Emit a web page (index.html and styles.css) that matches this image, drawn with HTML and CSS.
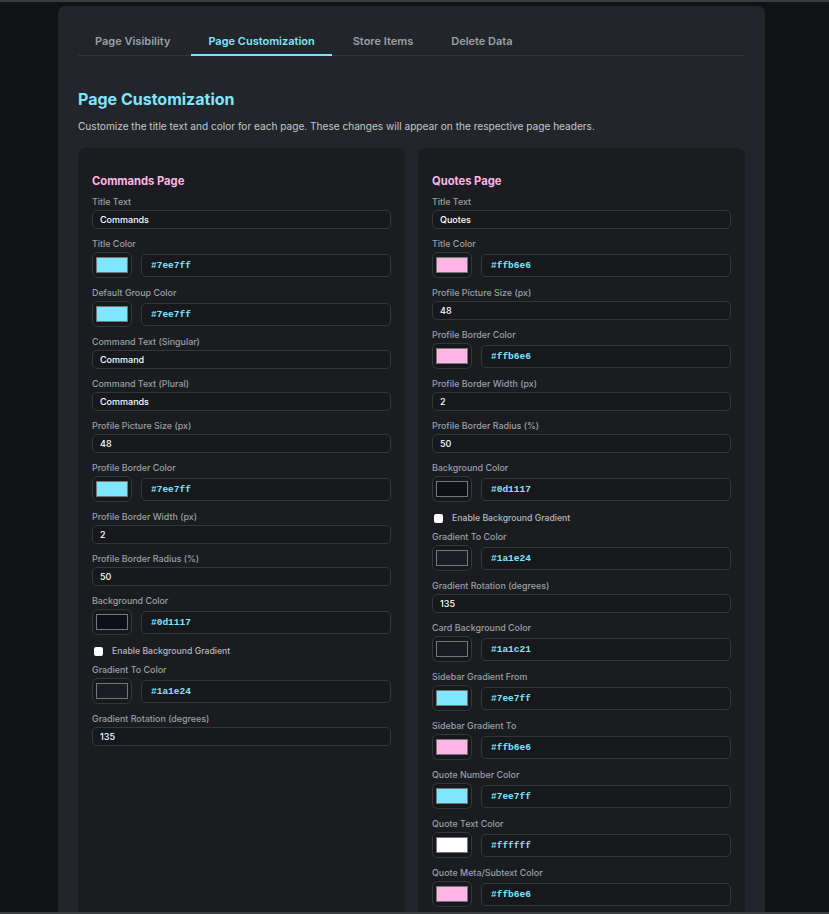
FILE: index.html
```html
<!DOCTYPE html>
<html lang="en">

<head>
    <meta http-equiv="Content-Type" content="text/html; charset=UTF-8">
    <meta name="viewport" content="width=device-width, initial-scale=1.0">
    <title>Page Customization</title>
    <link rel="stylesheet" href="styles.css">
</head>

<body>
    <div class="panel">
        <nav class="tabs">
            <button class="tab">Page Visibility</button>
            <button class="tab active">Page Customization</button>
            <button class="tab">Store Items</button>
            <button class="tab">Delete Data</button>
        </nav>

        <h1 class="title">Page Customization</h1>
        <p class="desc">Customize the title text and color for each page. These changes will appear on the respective page headers.</p>

        <div class="cards">
            <!-- commands page -->
            <section class="card">
                <h2>Commands Page</h2>
                <div class="field">
                    <label>Title Text</label>
                    <input class="text" type="text" value="Commands">
                </div>
                <div class="field">
                    <label>Title Color</label>
                    <div class="color-row">
                        <span class="swatch"><span style="background:#7ee7ff"></span></span>
                        <input class="text hex" type="text" value="#7ee7ff">
                    </div>
                </div>
                <div class="field">
                    <label>Default Group Color</label>
                    <div class="color-row">
                        <span class="swatch"><span style="background:#7ee7ff"></span></span>
                        <input class="text hex" type="text" value="#7ee7ff">
                    </div>
                </div>
                <div class="field">
                    <label>Command Text (Singular)</label>
                    <input class="text" type="text" value="Command">
                </div>
                <div class="field">
                    <label>Command Text (Plural)</label>
                    <input class="text" type="text" value="Commands">
                </div>
                <div class="field">
                    <label>Profile Picture Size (px)</label>
                    <input class="text" type="text" value="48">
                </div>
                <div class="field">
                    <label>Profile Border Color</label>
                    <div class="color-row">
                        <span class="swatch"><span style="background:#7ee7ff"></span></span>
                        <input class="text hex" type="text" value="#7ee7ff">
                    </div>
                </div>
                <div class="field">
                    <label>Profile Border Width (px)</label>
                    <input class="text" type="text" value="2">
                </div>
                <div class="field">
                    <label>Profile Border Radius (%)</label>
                    <input class="text" type="text" value="50">
                </div>
                <div class="field">
                    <label>Background Color</label>
                    <div class="color-row">
                        <span class="swatch"><span style="background:#0d1117"></span></span>
                        <input class="text hex" type="text" value="#0d1117">
                    </div>
                </div>
                <div class="check-row">
                    <span class="check"></span>
                    <span>Enable Background Gradient</span>
                </div>
                <div class="field">
                    <label>Gradient To Color</label>
                    <div class="color-row">
                        <span class="swatch"><span style="background:#1a1e24"></span></span>
                        <input class="text hex" type="text" value="#1a1e24">
                    </div>
                </div>
                <div class="field">
                    <label>Gradient Rotation (degrees)</label>
                    <input class="text" type="text" value="135">
                </div>
            </section>

            <!-- quotes page -->
            <section class="card">
                <h2>Quotes Page</h2>
                <div class="field">
                    <label>Title Text</label>
                    <input class="text" type="text" value="Quotes">
                </div>
                <div class="field">
                    <label>Title Color</label>
                    <div class="color-row">
                        <span class="swatch"><span style="background:#ffb6e6"></span></span>
                        <input class="text hex" type="text" value="#ffb6e6">
                    </div>
                </div>
                <div class="field">
                    <label>Profile Picture Size (px)</label>
                    <input class="text" type="text" value="48">
                </div>
                <div class="field">
                    <label>Profile Border Color</label>
                    <div class="color-row">
                        <span class="swatch"><span style="background:#ffb6e6"></span></span>
                        <input class="text hex" type="text" value="#ffb6e6">
                    </div>
                </div>
                <div class="field">
                    <label>Profile Border Width (px)</label>
                    <input class="text" type="text" value="2">
                </div>
                <div class="field">
                    <label>Profile Border Radius (%)</label>
                    <input class="text" type="text" value="50">
                </div>
                <div class="field">
                    <label>Background Color</label>
                    <div class="color-row">
                        <span class="swatch"><span style="background:#0d1117"></span></span>
                        <input class="text hex" type="text" value="#0d1117">
                    </div>
                </div>
                <div class="check-row">
                    <span class="check"></span>
                    <span>Enable Background Gradient</span>
                </div>
                <div class="field">
                    <label>Gradient To Color</label>
                    <div class="color-row">
                        <span class="swatch"><span style="background:#1a1e24"></span></span>
                        <input class="text hex" type="text" value="#1a1e24">
                    </div>
                </div>
                <div class="field">
                    <label>Gradient Rotation (degrees)</label>
                    <input class="text" type="text" value="135">
                </div>
                <div class="field">
                    <label>Card Background Color</label>
                    <div class="color-row">
                        <span class="swatch"><span style="background:#1a1c21"></span></span>
                        <input class="text hex" type="text" value="#1a1c21">
                    </div>
                </div>
                <div class="field">
                    <label>Sidebar Gradient From</label>
                    <div class="color-row">
                        <span class="swatch"><span style="background:#7ee7ff"></span></span>
                        <input class="text hex" type="text" value="#7ee7ff">
                    </div>
                </div>
                <div class="field">
                    <label>Sidebar Gradient To</label>
                    <div class="color-row">
                        <span class="swatch"><span style="background:#ffb6e6"></span></span>
                        <input class="text hex" type="text" value="#ffb6e6">
                    </div>
                </div>
                <div class="field">
                    <label>Quote Number Color</label>
                    <div class="color-row">
                        <span class="swatch"><span style="background:#7ee7ff"></span></span>
                        <input class="text hex" type="text" value="#7ee7ff">
                    </div>
                </div>
                <div class="field">
                    <label>Quote Text Color</label>
                    <div class="color-row">
                        <span class="swatch"><span style="background:#ffffff"></span></span>
                        <input class="text hex" type="text" value="#ffffff">
                    </div>
                </div>
                <div class="field">
                    <label>Quote Meta/Subtext Color</label>
                    <div class="color-row">
                        <span class="swatch"><span style="background:#ffb6e6"></span></span>
                        <input class="text hex" type="text" value="#ffb6e6">
                    </div>
                </div>
            </section>
        </div>
    </div>
</body>

</html>
```

FILE: styles.css
```css
html {
    height: 100%;
}

body {
    margin: 0;
    height: 100%;
    box-sizing: border-box;
    overflow: hidden;
    background: #111214;
    border-top: 2px solid #3a3b3e;
    border-bottom: 2px solid #3a3b3e;
    font-family: Inter, "Noto Sans", sans-serif;
    color: #e6e8ea;
}

.panel {
    width: 707px;
    box-sizing: border-box;
    margin: 4px 0 0 58px;
    padding: 20px 20px 0;
    background: #222529;
    border-radius: 7px 7px 0 0;
    min-height: 1200px;
}

.tabs {
    display: flex;
    gap: 4px;
    border-bottom: 1px solid #33363a;
}

.tab {
    background: none;
    border: none;
    border-bottom: 2px solid transparent;
    padding: 2px 17px 0;
    height: 30px;
    margin-bottom: -1px;
    font-family: inherit;
    font-size: 11px;
    font-weight: 600;
    color: #9aa0a6;
    cursor: pointer;
}

.tab.active {
    color: #7ee7ff;
    border-bottom-color: #7ee7ff;
}

.title {
    margin: 33px 0 0;
    font-size: 16px;
    line-height: 20px;
    font-weight: 700;
    color: #7ee7ff;
}

.desc {
    margin: 10px 0 15px;
    font-size: 10.1px;
    line-height: 14px;
    color: #c4c8cc;
}

.cards {
    display: grid;
    grid-template-columns: 1fr 1fr;
    gap: 13px;
}

.card {
    background: #1a1c20;
    border-radius: 8px;
    padding: 25px 14px 14px;
    min-height: 900px;
}

.card h2 {
    margin: 0 0 7px;
    font-size: 11.2px;
    line-height: 16px;
    font-weight: 700;
    color: #ffb6e6;
}

.field {
    margin-bottom: 9px;
}

.field label {
    display: block;
    margin-bottom: 2px;
    font-size: 8.9px;
    line-height: 12px;
    font-weight: 500;
    color: #9aa0a6;
}

.text {
    display: block;
    width: 100%;
    height: 19px;
    box-sizing: border-box;
    padding: 0 7px;
    background: #16181b;
    border: 1px solid #33363a;
    border-radius: 5px;
    font-family: inherit;
    font-size: 9px;
    font-weight: 500;
    color: #ffffff;
    outline: none;
}

.color-row {
    display: flex;
    align-items: center;
    gap: 9px;
}

.swatch {
    flex: none;
    width: 40px;
    height: 26px;
    box-sizing: border-box;
    padding: 4px 3px;
    border: 1px solid #33363a;
    border-radius: 6px;
    background: #16181b;
}

.swatch span {
    display: block;
    height: 100%;
    box-sizing: border-box;
    border: 1px solid #767676;
}

.text.hex {
    flex: 1;
    height: 23px;
    padding: 0 9px;
    font-family: "Liberation Mono", monospace;
    font-size: 9.5px;
    font-weight: 700;
    color: #7ee7ff;
}

.check-row {
    display: flex;
    align-items: center;
    gap: 9px;
    height: 14px;
    margin: 0 0 6px 2px;
    font-size: 8.7px;
    font-weight: 500;
    color: #b4b8bd;
}

.check {
    width: 9px;
    height: 9px;
    background: #ffffff;
    border-radius: 2px;
}
```
